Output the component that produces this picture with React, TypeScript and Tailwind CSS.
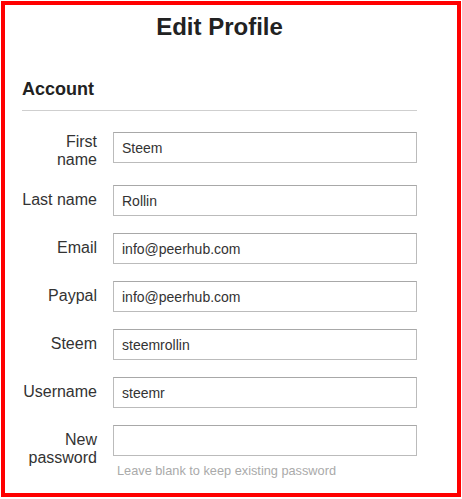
const fields = [
	{ label: ['First', 'name'], value: 'Steem', first: true },
	{ label: ['Last name'], value: 'Rollin' },
	{ label: ['Email'], value: 'info@peerhub.com' },
	{ label: ['Paypal'], value: 'info@peerhub.com' },
	{ label: ['Steem'], value: 'steemrollin' },
	{ label: ['Username'], value: 'steemr' },
];

const Field = ({ label, value, first }: { label: string[]; value: string; first?: boolean }) => {
	return (
		<div className={first ? 'flex items-start h-[36px] mb-[17px]' : 'flex items-start h-[31px] mb-[17px]'}>
			<label
				className={
					'w-[75px] shrink-0 text-right text-[16px] leading-[18px] text-[#333] ' + (first ? 'pt-px' : 'pt-[6px]')
				}>
				{label.map((l) => (
					<div key={l}>{l}</div>
				))}
			</label>
			<input
				readOnly
				value={value}
				className="ml-[16px] w-[304px] h-[31px] border border-[#bbb] border-t-[#a8a8a8] px-[8px] text-[14px] text-[#333] outline-none"
			/>
		</div>
	);
};

export default function App() {
	return (
		<div className="ml-px mt-px w-[460px] h-[496px] border-4 border-[#ff0000] bg-white font-['Liberation_Sans',Arial,sans-serif]">
			<div className="pl-[17px] pt-[8px] w-[412px]">
				<h1 className="text-center text-[24px] leading-[28px] font-bold text-[#222]">Edit Profile</h1>
				<h2 className="mt-[37px] text-[18px] leading-[22px] font-bold text-[#222]">Account</h2>
				<div className="mt-[10px] border-t border-[#cfcfcf]" />
				<div className="mt-[21px]">
					{fields.map((f) => (
						<Field key={f.value + f.label[0]} label={f.label} value={f.value} first={f.first} />
					))}
					<div className="flex items-start">
						<label className="w-[75px] shrink-0 text-right text-[16px] leading-[18px] text-[#333] pt-[6px]">
							<div>New</div>
							<div>password</div>
						</label>
						<div className="ml-[16px]">
							<input
								readOnly
								value=""
								className="block w-[304px] h-[31px] border border-[#bbb] border-t-[#a8a8a8] px-[8px] text-[14px] text-[#333] outline-none"
							/>
							<p className="mt-[7px] ml-[4px] text-[12.75px] leading-[15px] text-[#aaa]">
								Leave blank to keep existing password
							</p>
						</div>
					</div>
				</div>
			</div>
		</div>
	);
}
